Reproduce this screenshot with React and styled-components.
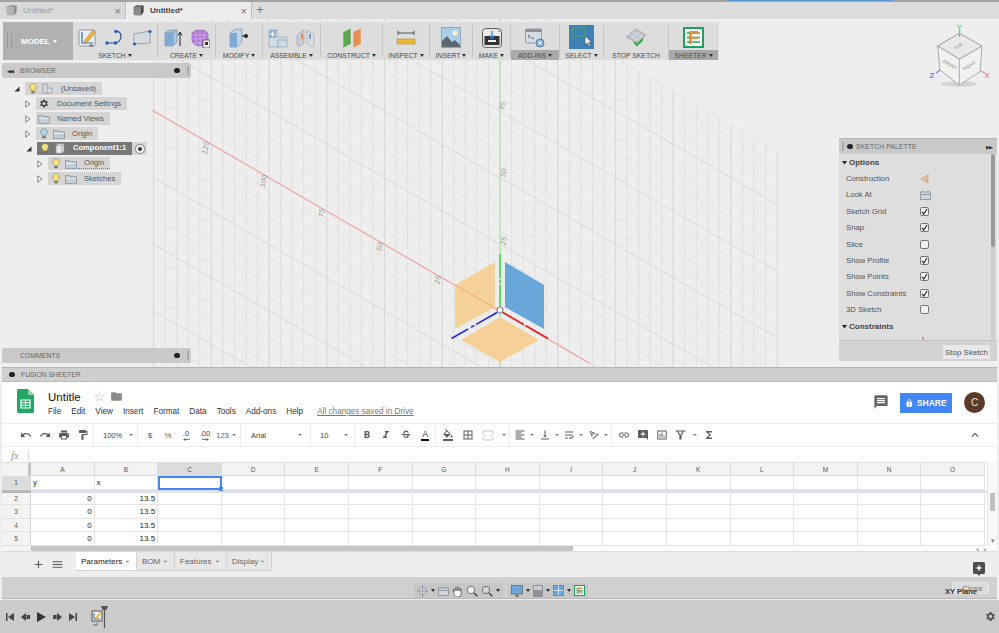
import styled, { createGlobalStyle } from "styled-components";
import {
  MdUndo,
  MdRedo,
  MdPrint,
  MdFormatPaint,
  MdFormatBold,
  MdFormatItalic,
  MdStrikethroughS,
  MdFormatColorFill,
  MdBorderAll,
  MdFormatAlignLeft,
  MdVerticalAlignBottom,
  MdWrapText,
  MdTextRotationAngleup,
  MdLink,
  MdAddComment,
  MdInsertChartOutlined,
  MdFunctions,
  MdKeyboardArrowUp,
  MdMessage,
  MdLock,
  MdStarBorder,
  MdFolder,
  MdAdd,
  MdMenu,
  MdArrowDropDown,
  MdSettings,
} from "react-icons/md";

const GlobalStyle = createGlobalStyle`
  html, body {
    margin: 0;
    padding: 0;
    background: #eeeeee;
    overflow: hidden;
  }
  * {
    box-sizing: border-box;
  }
`;

const Page = styled.div`
  width: 999px;
  height: 633px;
  display: flex;
  flex-direction: column;
  font-family: "Liberation Sans", Arial, sans-serif;
  background: #eeeeee;
  overflow: hidden;
  position: relative;
`;

/* ---------- document tabs ---------- */

const TabBar = styled.div`
  height: 19px;
  flex: none;
  display: flex;
  align-items: stretch;
  background: #dcdcdc;
  border-top: 2px solid #a3a3a3;
  position: relative;
`;

const LoadBar = styled.div`
  position: absolute;
  left: 727px;
  top: -2px;
  width: 166px;
  height: 1px;
  background: #5a9ad8;
`;

const DocTab = styled.div`
  width: 126px;
  display: flex;
  align-items: center;
  padding: 0 4px 0 6px;
  gap: 6px;
  font-size: 8px;
  background: ${(p) => (p.$active ? "#ececec" : "#d9d9d9")};
  color: ${(p) => (p.$active ? "#444" : "#999")};
  font-weight: ${(p) => (p.$active ? 700 : 400)};
  border-right: 1px solid #bdbdbd;
  border-left: ${(p) => (p.$active ? "1px solid #f5f5f5" : "none")};
`;

const TabClose = styled.span`
  margin-left: auto;
  font-size: 11px;
  font-weight: 400;
  color: #777;
`;

const TabPlus = styled.span`
  padding-left: 4px;
  font-size: 13px;
  line-height: 16px;
  color: #777;
`;

/* ---------- 3d viewport ---------- */

const Viewport = styled.div`
  height: 348px;
  flex: none;
  position: relative;
  background: #eeeeee;
  overflow: hidden;
`;

const CanvasSvg = styled.svg`
  position: absolute;
  inset: 0;
  width: 999px;
  height: 348px;
`;

const Toolbar = styled.div`
  position: absolute;
  left: 3px;
  top: 3px;
  width: 716px;
  height: 38px;
  display: flex;
  background: #dddddd;
`;

const ModelButton = styled.div`
  width: 70px;
  display: flex;
  align-items: center;
  justify-content: center;
  gap: 3px;
  padding-left: 2px;
  background: #b1b1b1;
  color: #fff;
  font-size: 8px;
  font-weight: 700;
  position: relative;
  &::before {
    content: "";
    position: absolute;
    left: 4px;
    top: 11px;
    width: 3px;
    height: 15px;
    border-left: 1px solid #989898;
    border-right: 1px solid #989898;
  }
`;

const ToolGroup = styled.div`
  width: ${(p) => p.$w}px;
  flex: none;
  display: flex;
  flex-direction: column;
`;

const ToolIcons = styled.div`
  flex: 1;
  display: flex;
  align-items: center;
  justify-content: center;
  gap: ${(p) => p.$gap || 7}px;
  padding-top: 3px;
`;

const ToolLabel = styled.div`
  height: 10px;
  display: flex;
  align-items: center;
  justify-content: center;
  gap: 2px;
  font-size: 6.8px;
  color: #4a4a4a;
  white-space: nowrap;
  background: ${(p) => (p.$on ? "#a9a9a9" : "transparent")};
`;

const Caret = styled.span`
  width: 0;
  height: 0;
  border-left: 2.5px solid transparent;
  border-right: 2.5px solid transparent;
  border-top: 3.5px solid ${(p) => p.$color || "#333"};
`;

const ToolSep = styled.div`
  width: 1px;
  height: 32px;
  flex: none;
  align-self: center;
  background: #c5c5c5;
`;

const SelectTile = styled.div`
  width: 25px;
  height: 24px;
  background: #3f81b6;
  margin-top: -1px;
`;

/* ---------- floating panels ---------- */

const PanelHead = styled.div`
  height: 15px;
  display: flex;
  align-items: center;
  padding: 0 2px 0 5px;
  gap: 4px;
  background: #c9c9c9;
  border-radius: 2px;
  font-size: 6.8px;
  color: #666;
  letter-spacing: 0.1px;
`;

const PaletteHead = styled(PanelHead)`
  padding-left: 3px;
  gap: 3px;
  border-radius: 0;
  flex: none;
`;

const DotButton = styled.span`
  width: 6px;
  height: 5px;
  border-radius: 3px;
  background: #222;
  margin-left: ${(p) => (p.$end ? "auto" : "0")};
  flex: none;
`;

const Grip = styled.span`
  width: 2px;
  height: 9px;
  margin-left: ${(p) => (p.$flush ? 0 : 3)}px;
  background: #aaa;
  flex: none;
`;

const DoubleArrow = styled.span`
  font-size: 5px;
  color: #333;
  letter-spacing: -1px;
  width: 9px;
  flex: none;
  margin-left: ${(p) => (p.$end ? "auto" : "0")};
`;

const BrowserPanel = styled.div`
  position: absolute;
  left: 2px;
  top: 44px;
  width: 189px;
`;

const CommentsPanel = styled.div`
  position: absolute;
  left: 2px;
  top: 329px;
  width: 189px;
`;

const Tree = styled.div`
  padding-top: 3px;
`;

const TreeRow = styled.div`
  height: 15px;
  display: flex;
  align-items: center;
  padding-left: ${(p) => p.$indent}px;
`;

const Expander = styled.span`
  width: 12px;
  flex: none;
  display: flex;
  justify-content: flex-start;
  padding-left: 1px;
`;

const TreeChip = styled.div`
  height: 13px;
  display: flex;
  align-items: center;
  background: ${(p) => (p.$active ? "#787878" : "#d5d5d5")};
  color: ${(p) => (p.$active ? "#fff" : "#555")};
  font-size: 7.6px;
  font-weight: ${(p) => (p.$active ? 700 : 400)};
`;

const TreeIcon = styled.span`
  width: 15px;
  flex: none;
  display: flex;
  justify-content: center;
`;

const TreeText = styled.span`
  padding: 0 6px 0 6px;
  white-space: nowrap;
  line-height: 10px;
  border-bottom: ${(p) => (p.$squiggle ? "1px dotted #5f86c4" : "none")};
`;

const TreeTail = styled.div`
  width: 15px;
  height: 13px;
  display: flex;
  align-items: center;
  justify-content: center;
  background: #d5d5d5;
`;

const RadioDot = styled.span`
  width: 8px;
  height: 8px;
  border-radius: 50%;
  border: 2px solid #f2f2f2;
  background: #333;
  box-shadow: 0 0 0 1px #8a8a8a;
`;

const Palette = styled.div`
  position: absolute;
  left: 839px;
  top: 119px;
  width: 158px;
  height: 223px;
  display: flex;
  flex-direction: column;
  background: #dedede;
  border-top: 1px solid #b5b5b5;
`;

const PaletteBody = styled.div`
  flex: 1;
  overflow: hidden;
  position: relative;
`;

const PaletteTrack = styled.div`
  position: absolute;
  right: 2px;
  top: 0;
  bottom: 0;
  width: 4px;
  background: #cfcfcf;
`;

const PaletteThumb = styled.div`
  height: 93px;
  background: #989898;
  border-radius: 2px;
`;

const PaletteHeading = styled.div`
  height: 16.4px;
  display: flex;
  align-items: center;
  gap: 2px;
  padding-left: 3px;
  font-size: 8px;
  font-weight: 700;
  color: #444;
`;

const PaletteRow = styled.div`
  height: 16.4px;
  display: flex;
  align-items: center;
  padding-left: 7px;
  font-size: 7.7px;
  color: #555;
`;

const PaletteLabel = styled.span`
  width: 74px;
  flex: none;
`;

const CheckBox = styled.span`
  width: 9px;
  height: 9px;
  display: flex;
  align-items: center;
  justify-content: center;
  border: 1px solid #777;
  border-radius: 2px;
  background: #f1f1f1;
`;

const PaletteFooter = styled.div`
  height: 21px;
  flex: none;
  display: flex;
  align-items: flex-end;
  justify-content: flex-end;
  padding: 0 7px 2px 0;
  background: #d3d3d3;
  border-top: 1px solid #c2c2c2;
`;

const StopButton = styled.div`
  width: 47px;
  height: 14px;
  display: flex;
  align-items: center;
  justify-content: center;
  background: #e8e8e8;
  font-size: 8px;
  color: #555;
  border-radius: 1px;
`;

const CubeSvg = styled.svg`
  position: absolute;
  left: 925px;
  top: 4px;
  width: 70px;
  height: 80px;
`;

/* ---------- embedded sheet ---------- */

const Sheeter = styled.div`
  height: 231px;
  flex: none;
  margin: 0 2px;
  display: flex;
  flex-direction: column;
  background: #fff;
  border-top: 1px solid #b5b5b5;
`;

const SheeterHead = styled.div`
  height: 14px;
  flex: none;
  display: flex;
  align-items: center;
  gap: 6px;
  padding-left: 7px;
  background: #cfcfcf;
  color: #666;
  font-size: 6.8px;
  border-bottom: 1px solid #bbb;
`;

const DocHeader = styled.div`
  height: 41px;
  flex: none;
  display: flex;
  padding: 7px 12px 0 15px;
`;

const TitleBlock = styled.div`
  margin-left: 14px;
  display: flex;
  flex-direction: column;
`;

const TitleRow = styled.div`
  height: 15px;
  display: flex;
  align-items: center;
  font-size: 11.5px;
  color: #111;
`;

const TitleIcon = styled.span`
  display: flex;
  margin-left: ${(p) => p.$ml}px;
  color: ${(p) => p.$color};
  font-size: ${(p) => p.$size}px;
`;

const MenuRow = styled.div`
  margin-top: 3px;
  display: flex;
  gap: 10px;
  font-size: 8.2px;
  color: #333;
`;

const SavedNote = styled.span`
  margin-left: 4px;
  color: #777;
  text-decoration: underline;
`;

const DocActions = styled.div`
  margin-left: auto;
  display: flex;
  align-items: flex-start;
`;

const CommentIcon = styled.span`
  display: flex;
  margin: 5px 11px 0 0;
  font-size: 16px;
  color: #666;
`;

const ShareButton = styled.div`
  width: 52px;
  height: 20px;
  margin-top: 4px;
  display: flex;
  align-items: center;
  justify-content: center;
  gap: 3px;
  background: #4285f4;
  border-radius: 1px;
  color: #fff;
  font-size: 8.5px;
  font-weight: 700;
`;

const Avatar = styled.div`
  width: 21px;
  height: 21px;
  margin: 3px 0 0 12px;
  display: flex;
  align-items: center;
  justify-content: center;
  border-radius: 50%;
  background: #5c3a2a;
  color: #f1e6e0;
  font-size: 10px;
`;

const SheetTools = styled.div`
  height: 24px;
  flex: none;
  display: flex;
  border-top: 1px solid #ececec;
  border-bottom: 1px solid #ececec;
`;

const ToolSet = styled.div`
  width: ${(p) => (p.$w ? `${p.$w}px` : "auto")};
  flex: ${(p) => (p.$w ? "none" : "1")};
  display: flex;
  align-items: center;
  padding-left: ${(p) => p.$pl || 0}px;
  border-right: ${(p) => (p.$w ? "1px solid #ececec" : "none")};
`;

const ToolCell = styled.span`
  width: ${(p) => p.$w}px;
  flex: none;
  display: flex;
  align-items: center;
  justify-content: center;
  font-size: ${(p) => p.$size || 12}px;
  color: ${(p) => p.$color || "#5c5c5c"};
`;

const ToolText = styled.span`
  flex: ${(p) => (p.$grow ? "1" : "none")};
  font-size: 7.5px;
  color: #444;
`;

const DownTick = styled.span`
  width: 0;
  height: 0;
  flex: none;
  margin: ${(p) => p.$m || "0 auto"};
  border-left: 2px solid transparent;
  border-right: 2px solid transparent;
  border-top: 2px solid #777;
`;

const ColorA = styled.span`
  display: flex;
  flex-direction: column;
  align-items: center;
  font-size: 9px;
  line-height: 9px;
  color: #444;
  border-bottom: 2px solid #111;
  padding: 0 1px;
`;

const Decimal = styled.span`
  display: flex;
  flex-direction: column;
  align-items: center;
  font-size: 7.5px;
  line-height: 8px;
  color: #444;
`;

const ChevronCell = styled.span`
  margin-left: auto;
  margin-right: 13px;
  width: 19px;
  display: flex;
  justify-content: center;
  font-size: 14px;
  color: #555;
`;

const FormulaBar = styled.div`
  height: 15px;
  flex: none;
  display: flex;
  align-items: center;
  padding-left: 9px;
  font-family: "Liberation Serif", serif;
  font-style: italic;
  font-size: 11px;
  color: #999;
`;

const FormulaDivider = styled.span`
  width: 1px;
  height: 10px;
  margin-left: 9px;
  background: #ddd;
`;

const SheetArea = styled.div`
  height: 84px;
  flex: none;
  display: flex;
`;

const SheetTable = styled.div`
  width: 985px;
  flex: none;
  display: flex;
  flex-direction: column;
`;

const GridRow = styled.div`
  height: ${(p) => p.$h}px;
  flex: none;
  display: grid;
  grid-template-columns: 29px repeat(15, 63.6px);
`;

const CornerCell = styled.div`
  background: #f3f3f3;
  border-right: 3px solid #c4c4c4;
  border-top: 1px solid #e0e0e0;
`;

const ColHead = styled.div`
  display: flex;
  align-items: center;
  justify-content: center;
  background: ${(p) => (p.$on ? "#dcdcdc" : "#f3f3f3")};
  border-right: 1px solid #dcdcdc;
  border-top: 1px solid #e0e0e0;
  border-bottom: 1px solid #dcdcdc;
  font-size: 6.5px;
  color: #555;
`;

const RowHead = styled.div`
  display: flex;
  align-items: center;
  justify-content: center;
  background: ${(p) => (p.$on ? "#dcdcdc" : "#f3f3f3")};
  border-right: 1px solid #d6d6d6;
  border-bottom: 1px solid #e2e2e2;
  font-size: 6.5px;
  color: #555;
`;

const Cell = styled.div`
  display: flex;
  align-items: center;
  justify-content: ${(p) => (p.$num ? "flex-end" : "flex-start")};
  padding: 0 2px;
  border-right: 1px solid #e4e4e4;
  border-bottom: 1px solid #e4e4e4;
  font-size: 8px;
  color: #222;
  position: relative;
  ${(p) =>
    p.$selected &&
    `
    outline: 2px solid #4285f4;
    outline-offset: -2px;
    &::after {
      content: "";
      position: absolute;
      right: -2px;
      bottom: -2px;
      width: 4px;
      height: 4px;
      background: #4285f4;
    }
  `}
`;

const FreezeBar = styled.div`
  height: 3px;
  flex: none;
  display: flex;
`;

const FreezeCorner = styled.div`
  width: 29px;
  background: #b9b9b9;
`;

const FreezeRest = styled.div`
  flex: 1;
  background: #dde1ec;
`;

const VScroll = styled.div`
  flex: 1;
  display: flex;
  flex-direction: column;
  background: #f8f8f8;
  border-left: 1px solid #e4e4e4;
  padding-top: 31px;
`;

const VThumb = styled.div`
  height: 18px;
  margin: 0 2px;
  background: #c0c0c0;
`;

const VArrow = styled.div`
  margin-top: auto;
  font-size: 7px;
  line-height: 10px;
  text-align: center;
  color: #888;
`;

const HScroll = styled.div`
  height: 6px;
  flex: none;
  display: flex;
  background: #fff;
  border-bottom: 1px solid #ddd;
`;

const HSpacer = styled.div`
  width: 29px;
  background: #f3f3f3;
`;

const HThumb = styled.div`
  width: 542px;
  background: #c6c6c6;
`;

const HArrows = styled.div`
  margin-left: auto;
  margin-right: 10px;
  display: flex;
  gap: 5px;
  font-size: 5px;
  line-height: 6px;
  color: #888;
`;

const SheetTabs = styled.div`
  height: 25px;
  flex: none;
  display: flex;
  align-items: flex-start;
  padding-left: 29px;
  background: #eeeeee;
`;

const TabTool = styled.span`
  width: ${(p) => p.$w}px;
  height: 19px;
  flex: none;
  display: flex;
  align-items: center;
  justify-content: center;
  font-size: 13px;
  color: #555;
  margin-top: 3px;
`;

const SheetTab = styled.div`
  width: ${(p) => p.$w}px;
  height: 19px;
  flex: none;
  display: flex;
  align-items: center;
  justify-content: space-between;
  padding: 0 4px 0 5px;
  font-size: 8px;
  color: ${(p) => (p.$active ? "#222" : "#666")};
  background: ${(p) => (p.$active ? "#fff" : "#e8e8e8")};
  border-right: 1px solid #d4d4d4;
  border-bottom: 1px solid #d4d4d4;
`;

const ExploreSlot = styled.span`
  margin-left: auto;
  margin-right: 12px;
  margin-top: 10px;
  display: flex;
`;

const NavStrip = styled.div`
  height: 22px;
  flex: none;
  display: flex;
  padding-left: 412px;
  background: #d0d0d0;
  border-bottom: 1px solid #b9b9b9;
  position: relative;
`;

const NavChip = styled.div`
  height: 15px;
  margin-top: 6px;
  margin-right: 5px;
  display: flex;
  align-items: center;
  gap: ${(p) => p.$gap || 3}px;
  padding: 0 3px;
  background: #c7c7c7;
`;

const CloseButton = styled.div`
  margin: 5px 8px 0 auto;
  width: 37px;
  height: 12px;
  display: flex;
  align-items: center;
  justify-content: center;
  padding-left: 4px;
  background: #dcdcdc;
  border: 1px solid #e4e4e4;
  font-size: 8px;
  color: #777;
`;

const PlaneName = styled.span`
  position: absolute;
  left: 943px;
  top: 10px;
  font-size: 7.5px;
  font-weight: 700;
  color: #333;
  white-space: nowrap;
`;

const Timeline = styled.div`
  height: 33px;
  margin-top: 2px;
  flex: none;
  display: flex;
  align-items: center;
  padding: 0 3px 0 2px;
  background: #cbcbcb;
`;

const PlayButton = styled.span`
  width: 15.7px;
  flex: none;
  display: flex;
  justify-content: center;
`;

const TimelineItem = styled.span`
  display: flex;
  margin-left: 11px;
`;

const GearSlot = styled.span`
  margin-left: auto;
  display: flex;
  font-size: 11px;
  color: #555;
`;

/* ---------- drawings ---------- */

const Bulb = ({ color = "#f6e27a" }) => (
  <svg width="8" height="11" viewBox="0 0 8 11">
    <path d="M4 .5a3.4 3.4 0 0 1 2 6.2V8H2V6.7A3.4 3.4 0 0 1 4 .5z" fill={color} stroke="#8a8a6a" strokeWidth=".6" />
    <rect x="2.4" y="8.4" width="3.2" height="1.8" fill="#666" />
  </svg>
);

const Folder = () => (
  <svg width="12" height="10" viewBox="0 0 12 10">
    <path d="M.5 1.5h4l1 1.2h6v7H.5z" fill="#c3cdd8" stroke="#7d8895" strokeWidth=".7" />
    <rect x="1" y="4" width="10" height="1" fill="#e9edf1" />
  </svg>
);

const Gear = () => (
  <svg width="11" height="11" viewBox="0 0 24 24" fill="#444">
    <path d="M19.4 13a7.5 7.5 0 0 0 0-2l2.1-1.6-2-3.4-2.5 1a7.5 7.5 0 0 0-1.7-1L15 3.4h-4l-.4 2.6a7.5 7.5 0 0 0-1.7 1l-2.5-1-2 3.4L6.5 11a7.5 7.5 0 0 0 0 2l-2.1 1.6 2 3.4 2.5-1a7.5 7.5 0 0 0 1.7 1l.4 2.6h4l.4-2.6a7.5 7.5 0 0 0 1.7-1l2.5 1 2-3.4zM13 15.5a3.5 3.5 0 1 1 0-7 3.5 3.5 0 0 1 0 7z" />
  </svg>
);

const BoxSmall = () => (
  <svg width="10" height="11" viewBox="0 0 10 11">
    <path d="M1 2.5 3 .8h6v7.7L7 10.2H1z" fill="#e6e6e6" stroke="#8a8f96" strokeWidth=".6" />
    <path d="M7 2.5v7.7M1 2.5h6L9 .8" fill="none" stroke="#8a8f96" strokeWidth=".6" />
  </svg>
);

const TabCube = ({ dark }) => (
  <svg width="11" height="11" viewBox="0 0 11 11">
    <path d="M.5 2 3.5.5h7V7L8 10.5H2L.5 9z" fill={dark ? "#8a8a8a" : "#b4b4b4"} />
    <path d="M.5 2H8L10.5.5h-7z" fill={dark ? "#5f5f5f" : "#9a9a9a"} />
    <path d="M8 2v8.5L10.5 7V.5z" fill={dark ? "#4a4a4a" : "#8c8c8c"} />
  </svg>
);

const CompIcon = () => (
  <svg width="11" height="11" viewBox="0 0 11 11">
    <path d="M1 1h4v4h5v5H1z" fill="#d6dde6" stroke="#8a8f96" strokeWidth=".7" />
    <path d="M5 5v5" stroke="#8a8f96" strokeWidth=".6" />
  </svg>
);

const TriOpen = () => (
  <svg width="6" height="8" viewBox="0 0 6 8">
    <path d="M.8.8 5 4 .8 7.2z" fill="#fafafa" stroke="#666" strokeWidth=".8" />
  </svg>
);

const TriDown = () => (
  <svg width="6" height="6" viewBox="0 0 6 6">
    <path d="M5.5.5v5H.5z" fill="#333" />
  </svg>
);

const Check = () => (
  <svg width="7" height="7" viewBox="0 0 7 7">
    <path d="M1 3.8 2.8 6 6 1" fill="none" stroke="#222" strokeWidth="1.1" />
  </svg>
);

const HeadDown = () => (
  <svg width="5" height="5" viewBox="0 0 5 5">
    <path d="M0 1h5L2.5 4.5z" fill="#222" />
  </svg>
);

const SketchCreate = () => (
  <svg width="20" height="20" viewBox="0 0 20 20">
    <rect x="1" y="2" width="16" height="16" rx="1.5" fill="#e8eef4" stroke="#8d97a3" />
    <path d="M4 4v11h11" fill="none" stroke="#3a6cae" strokeWidth="1.2" />
    <path d="M7 12 15 2l2.5 2-8 10-3 1z" fill="#f2b632" stroke="#a3731d" strokeWidth=".5" />
    <path d="M13 16v3M11.5 17.5h4" stroke="#666" strokeWidth="1" />
  </svg>
);

const ArcIcon = () => (
  <svg width="20" height="20" viewBox="0 0 20 20">
    <path d="M2 15h7M11 3c7 0 7 12-2 12" fill="none" stroke="#2c4f7c" strokeWidth="1.2" />
    <circle cx="2" cy="15" r="1.7" fill="#1f5fc4" />
    <circle cx="10.5" cy="15" r="1.7" fill="#1f5fc4" />
    <circle cx="11" cy="3.5" r="1.7" fill="#1f5fc4" />
  </svg>
);

const RectIcon = () => (
  <svg width="20" height="20" viewBox="0 0 20 20">
    <path d="M2 6 18 3v12L2 16z" fill="#d7dce1" stroke="#7e8894" strokeWidth=".7" />
    <circle cx="2.5" cy="16" r="1.6" fill="#1f5fc4" />
    <circle cx="18" cy="3.5" r="1.6" fill="#1f5fc4" />
  </svg>
);

const ExtrudeIcon = () => (
  <svg width="19" height="20" viewBox="0 0 19 20">
    <path d="M1 5 5 2h8v12l-4 4H1z" fill="#a7c7e6" stroke="#6d8196" strokeWidth=".6" />
    <path d="M1 5h8v13M9 5l4-3" fill="none" stroke="#6d8196" strokeWidth=".6" />
    <path d="M1 5h8v13H1z" fill="#7fa9d2" />
    <path d="M16 18V5M14 7.5 16 4l2 3.5" fill="none" stroke="#222" strokeWidth="1" />
  </svg>
);

const MeshIcon = () => (
  <svg width="19" height="20" viewBox="0 0 19 20">
    <path d="M1 6c1-3 4-4 8-4s7 1 8 4v7c0 3-4 5-8 5s-7-2-8-5z" fill="#b27ad6" stroke="#7a4aa3" strokeWidth=".5" />
    <path d="M5 3v14M9 2v16M13 3v14M1 7h16M1 11h16M2 15h15" stroke="#dcc1ee" strokeWidth=".6" />
    <rect x="12" y="12" width="7" height="8" fill="#eee" stroke="#333" strokeWidth=".7" />
    <rect x="14" y="14" width="3" height="3" fill="#333" />
  </svg>
);

const PressIcon = () => (
  <svg width="20" height="20" viewBox="0 0 20 20">
    <path d="M1 5 6 1h7v13l-5 5H1z" fill="#bcd3ea" stroke="#6d8196" strokeWidth=".6" />
    <path d="M1 5h7v14H1z" fill="#7fa9d2" />
    <path d="M13 8h4" stroke="#222" strokeWidth="1.2" />
    <circle cx="17" cy="8" r="2" fill="#222" />
  </svg>
);

const JoinIcon = () => (
  <svg width="20" height="20" viewBox="0 0 20 20">
    <path d="M1 2h8v7h10v10H1z" fill="#cfdce9" stroke="#8a98a6" strokeWidth=".6" />
    <path d="M1 2h7v8H1z" fill="#8fb4da" />
    <path d="M4.5 3.5v5M2 6h5" stroke="#fff" strokeWidth="1" />
    <path d="M10 12h9M10 12v7" stroke="#8a98a6" strokeWidth=".7" />
  </svg>
);

const JointIcon = () => (
  <svg width="19" height="20" viewBox="0 0 19 20">
    <path d="M1 7 8 2v13l-5 4-2-2z" fill="#c7cdd4" stroke="#8a8f96" strokeWidth=".5" />
    <path d="M11 2l7 5v10l-2 2-5-4z" fill="#d9dee3" stroke="#8a8f96" strokeWidth=".5" />
    <rect x="5" y="6" width="2" height="5" fill="#e98a4a" />
    <rect x="13" y="6" width="2" height="5" fill="#6ea0d6" />
  </svg>
);

const ConstructIcon = () => (
  <svg width="20" height="22" viewBox="0 0 20 22">
    <path d="M1 5 9 1v16l-8 4z" fill="#5fa653" stroke="#e6efe2" strokeWidth=".5" />
    <path d="M11 5l8-4v16l-8 4z" fill="#e98f4f" stroke="#f6e4d6" strokeWidth=".5" />
  </svg>
);

const MeasureIcon = () => (
  <svg width="20" height="16" viewBox="0 0 20 16">
    <path d="M2 3h16M2 1v4M18 1v4" stroke="#555" strokeWidth="1" fill="none" />
    <rect x="1" y="9" width="18" height="5" fill="#efb632" stroke="#a87f1f" strokeWidth=".5" />
  </svg>
);

const PictureIcon = () => (
  <svg width="20" height="21" viewBox="0 0 20 21">
    <rect x=".5" y=".5" width="19" height="20" fill="#a9d0ea" stroke="#9aa3ac" />
    <circle cx="14" cy="6" r="2.6" fill="#f6efc8" />
    <path d="M1 20V14l5-5 5 6 3-2 5 5v2z" fill="#5f6770" />
  </svg>
);

const PrinterIcon = () => (
  <svg width="20" height="20" viewBox="0 0 20 20">
    <rect x=".6" y=".6" width="18.8" height="18.8" rx="3" fill="#ececec" stroke="#555" />
    <rect x="2.5" y="8" width="15" height="9" fill="#333" />
    <path d="M10 3v7M7.5 7.5 10 10.5l2.500-3" fill="none" stroke="#2a79c4" strokeWidth="1.2" />
    <rect x="6" y="12" width="8" height="2" fill="#eee" />
    <rect x="16" y="2.5" width="2" height="1.5" fill="#5fc24f" />
  </svg>
);

const ScriptIcon = () => (
  <svg width="20" height="20" viewBox="0 0 20 20">
    <rect x=".5" y="1" width="16" height="14" rx="1" fill="#d5dbe2" stroke="#7d8590" strokeWidth=".7" />
    <rect x=".5" y="1" width="16" height="3" fill="#8a929c" />
    <path d="M3 7l2 1.5L3 10M6 10h3" fill="none" stroke="#333" strokeWidth=".7" />
    <circle cx="15" cy="15" r="4" fill="#8fb9e0" stroke="#4e7ba8" />
    <circle cx="15" cy="15" r="1.4" fill="#eef4fa" />
  </svg>
);

const SelectIcon = () => (
  <svg width="25" height="24" viewBox="0 0 25 24">
    <rect x="3" y="3" width="13" height="8" fill="none" stroke="#4ea85a" strokeWidth="1" />
    <path d="M16 11v9l2.2-2 1.6 3.6 1.6-.7-1.6-3.5H23z" fill="#f0f0f0" stroke="#333" strokeWidth=".5" />
  </svg>
);

const StopIcon = () => (
  <svg width="22" height="20" viewBox="0 0 22 20">
    <path d="M1 9 11 1l10 6-8 8z" fill="#bcc2c9" stroke="#888" strokeWidth=".5" />
    <path d="M4 6.5l10 6M7.5 4l10 6M6 11l8-7M9.5 13.5l8-7" stroke="#eee" strokeWidth=".7" />
    <path d="M9 14l3 3 6-6" fill="none" stroke="#3aa34a" strokeWidth="2" />
  </svg>
);

const SheeterIcon = ({ size = 21 }) => (
  <svg width={size} height={size} viewBox="0 0 21 21">
    <rect x="1" y="1" width="19" height="19" fill="#fff" stroke="#1aa35a" strokeWidth="2" />
    <path d="M4 6h13M4 10.5h13M4 15h13" stroke="#1aa35a" strokeWidth="1.5" />
    <text x="10.5" y="17" fontFamily="Liberation Sans" fontWeight="700" fontSize="18" fill="#e98a3a" textAnchor="middle">
      F
    </text>
  </svg>
);

const SheetsLogo = () => (
  <svg width="17" height="24" viewBox="0 0 17 24">
    <path d="M1.5 0H11l6 6v16.5a1.5 1.5 0 0 1-1.5 1.5h-14A1.5 1.5 0 0 1 0 22.5v-21A1.5 1.5 0 0 1 1.5 0z" fill="#23a566" />
    <path d="M11 0l6 6h-6z" fill="#8ed1b1" />
    <path d="M4 11h9v8H4z" fill="none" stroke="#fff" strokeWidth="1.2" />
    <path d="M8.5 11v8M4 13.7h9M4 16.3h9" stroke="#fff" strokeWidth=".9" />
  </svg>
);

const FilterIcon = () => (
  <svg width="11" height="10" viewBox="0 0 11 10">
    <path d="M.5 1h10M2.5 1 5 5.5V9h1V5.5L8.5 1" fill="none" stroke="#5c5c5c" strokeWidth="1.2" />
  </svg>
);

const MergeIcon = () => (
  <svg width="12" height="11" viewBox="0 0 12 11">
    <path d="M1 4V1h10v3M1 7v3h10V7M1 5.5h3M8 5.5h3" fill="none" stroke="#c9c9c9" strokeWidth="1" />
  </svg>
);

const DecimalArrow = ({ dir }) => (
  <svg width="7" height="3" viewBox="0 0 7 3">
    <path d={dir === "left" ? "M7 1.5H1M2.5 0 1 1.5 2.5 3" : "M0 1.5h6M4.5 0 6 1.5 4.5 3"} fill="none" stroke="#444" strokeWidth=".7" />
  </svg>
);

const ExploreIcon = () => (
  <svg width="12" height="14" viewBox="0 0 12 14">
    <path d="M1.5 0h9A1.5 1.5 0 0 1 12 1.5v9a1.5 1.5 0 0 1-1.5 1.5h-3L6 14l-1.5-2h-3A1.5 1.5 0 0 1 0 10.5v-9A1.5 1.5 0 0 1 1.5 0z" fill="#4d4d4d" />
    <path d="M6 2.500 7 5l2.500 1L7 7 6 9.500 5 7 2.500 6 5 5z" fill="#fff" />
  </svg>
);

const OrbitIcon = () => (
  <svg width="11" height="12" viewBox="0 0 11 12">
    <circle cx="5.5" cy="6" r="3.5" fill="#dfe3e7" stroke="#7d8590" strokeWidth=".7" />
    <path d="M5.5 0v12M0 6h11" stroke="#7d8590" strokeWidth=".7" />
  </svg>
);

const LookIcon = () => (
  <svg width="11" height="10" viewBox="0 0 11 10">
    <rect x=".5" y="2" width="10" height="7.5" fill="#cfd5db" stroke="#7d8590" strokeWidth=".7" />
    <path d="M3 2V.5M8 2V.5M.5 4.5h10" stroke="#7d8590" strokeWidth=".7" />
  </svg>
);

const HandIcon = () => (
  <svg width="11" height="12" viewBox="0 0 11 12">
    <path d="M2 7V3.5M4 6V2M6 6V1.5M8 6.5V3M2 7 1 5.5M2 6l.5 4 2 1.500h3L9 9.500V4.500" fill="#fff" stroke="#555" strokeWidth="1.1" />
    <path d="M2.5 6h6v4L7 11.500H4L2.500 10z" fill="#fff" />
  </svg>
);

const ZoomIcon = ({ fill = "#f2f2f2" }) => (
  <svg width="12" height="12" viewBox="0 0 12 12">
    <circle cx="5" cy="5" r="3.7" fill={fill} stroke="#666" strokeWidth=".9" />
    <path d="M8 8l3.3 3.3" stroke="#444" strokeWidth="1.5" />
  </svg>
);

const MonitorIcon = () => (
  <svg width="12" height="12" viewBox="0 0 12 12">
    <rect x=".5" y=".5" width="11" height="8.5" fill="#6ea6db" stroke="#5a6570" strokeWidth=".7" />
    <path d="M4 11h4M6 9v2" stroke="#555" strokeWidth="1" />
  </svg>
);

const VisualIcon = () => (
  <svg width="10" height="12" viewBox="0 0 10 12">
    <rect x=".3" y=".3" width="9.4" height="11.4" rx="1" fill="#8f949a" stroke="#777" strokeWidth=".5" />
    <rect x="1" y="1" width="8" height="4" fill="#c9ccd0" />
  </svg>
);

const PanesIcon = () => (
  <svg width="11" height="11" viewBox="0 0 11 11">
    <rect x=".5" y=".5" width="10" height="10" fill="#6ea6db" stroke="#5a7a99" strokeWidth=".7" />
    <path d="M5.5.5v10M.5 5.5h10" stroke="#e6eef6" strokeWidth=".8" />
  </svg>
);

const SkipIcon = ({ dir }) => (
  <svg width="10" height="10" viewBox="0 0 10 10">
    {dir === "first" && <path d="M1 1h1.500v8H1zM9 1v8L3 5z" fill="#444" />}
    {dir === "prev" && <path d="M5 1v8L0 5zM5.500 3H9v4H5.500z" fill="#444" />}
    {dir === "play" && <path d="M1 0l9 5-9 5z" fill="#333" />}
    {dir === "next" && <path d="M5 1v8l5-4zM1 3h3.500v4H1z" fill="#444" />}
    {dir === "last" && <path d="M9 1H7.500v8H9zM1 1v8l6-4z" fill="#444" />}
  </svg>
);

const TimelineMark = () => (
  <svg width="18" height="22" viewBox="0 0 18 22">
    <rect x="1" y="5" width="10" height="10" fill="#e8eef4" stroke="#555" strokeWidth="1" />
    <path d="M3 7v6h6" fill="none" stroke="#3a6cae" />
    <path d="M4 12l5-6 1.500 1-5 6z" fill="#f2b632" />
    <path d="M2 19h4v-2" fill="none" stroke="#666" />
    <path d="M10 0h7l-1.500 4h-4z" fill="#555" />
    <path d="M13.500 3v19" stroke="#555" strokeWidth="1.2" />
  </svg>
);

/* ---------- viewport drawing ---------- */

const ORIGIN_X = 500;
const ORIGIN_Y = 311;
const SLOPE = 0.57735;
const X_STEP = 11.547;
const Y_STEP = 13.333;
const LEFT = 152;
const RIGHT = 778;

const diagY = (m, x) => ORIGIN_Y + m * Y_STEP + (x - ORIGIN_X) * SLOPE;

function Grid() {
  const verticals = [];
  for (let k = -30; k <= 24; k++) {
    const x = ORIGIN_X + k * X_STEP;
    verticals.push(
      <line
        key={`v${k}`}
        x1={x}
        x2={x}
        y1={diagY(-24, x)}
        y2={370}
        stroke={k % 5 === 0 ? "#d8d8d8" : "#e1e1e1"}
        strokeWidth={k % 5 === 0 ? 1.2 : 1}
      />
    );
  }
  const diagonals = [];
  for (let m = -24; m <= 40; m++) {
    diagonals.push(
      <line
        key={`d${m}`}
        x1={LEFT}
        x2={RIGHT}
        y1={diagY(m, LEFT)}
        y2={diagY(m, RIGHT)}
        stroke={m % 5 === 0 ? "#d9d9d9" : "#e2e2e2"}
        strokeWidth={m % 5 === 0 ? 1 : 0.9}
      />
    );
  }
  return (
    <>
      {verticals}
      {diagonals}
    </>
  );
}

const axisLabels = [
  { t: "125", x: 206, y: 148 },
  { t: "100", x: 264, y: 181 },
  { t: "75", x: 322, y: 213 },
  { t: "50", x: 380, y: 247 },
  { t: "25", x: 438, y: 280 },
  { t: "75", x: 503, y: 106 },
  { t: "50", x: 504, y: 173 },
  { t: "25", x: 504, y: 241 },
];

function Canvas() {
  return (
    <CanvasSvg viewBox="0 19 999 348">
      <Grid />
      <line x1="500" y1="19" x2="500" y2="367" stroke="#aeeaa4" strokeWidth="1.2" />
      <line x1={LEFT} y1="110" x2="590" y2="363.5" stroke="#f5a0a0" strokeWidth="1.1" />
      {axisLabels.map((l) => (
        <text
          key={`${l.t}-${l.x}`}
          x={l.x}
          y={l.y}
          transform={`rotate(-80 ${l.x} ${l.y})`}
          fontFamily="Liberation Sans"
          fontStyle="italic"
          fontSize="7.5"
          fill="#999"
          textAnchor="middle"
          dominantBaseline="middle"
        >
          {l.t}
        </text>
      ))}
      <polygon points="455,285 495,262 495,307 455,329" fill="#f6d096" fillOpacity=".95" />
      <polygon points="500,317 539,340 500,362 461,340" fill="#f6d096" />
      <polygon points="505,262 544,285 544,329 505,307" fill="#69a6d9" />
      <line x1="455" y1="285" x2="497" y2="309" stroke="#f2a77a" strokeWidth="1" />
      <line x1="500" y1="254" x2="500" y2="306" stroke="#3fdc4c" strokeWidth="1.6" strokeDasharray="24 2 3 2 30" />
      <line x1="497" y1="312.5" x2="451.5" y2="338.5" stroke="#2020e0" strokeWidth="1.6" strokeDasharray="24 2 4 3 30" />
      <line x1="503" y1="312.5" x2="548" y2="338.5" stroke="#f01c24" strokeWidth="1.6" strokeDasharray="24 2 30" />
      <circle cx="500" cy="310" r="3" fill="#f2f2f2" stroke="#888" strokeWidth="1.2" />
    </CanvasSvg>
  );
}

function ViewCube() {
  const faceText = {
    fontFamily: "Liberation Sans",
    fontSize: 4.5,
    fill: "#8a8a8a",
    textAnchor: "middle",
  };
  return (
    <CubeSvg viewBox="925 23 70 80">
      <ellipse cx="959" cy="84" rx="18" ry="3" fill="#d4d4d4" />
      <path d="M937.7 46 959.3 33.3 982 46 980 71.7 959.3 85 940 70z" fill="#f1f1f1" stroke="#999" strokeWidth=".8" />
      <path d="M937.7 46 959.3 59 982 46M959.3 59v26" fill="none" stroke="#999" strokeWidth=".8" />
      <path d="M937.7 46 959.3 33.3 982 46 959.3 59z" fill="#e9e9e9" stroke="#999" strokeWidth=".8" />
      <text {...faceText} transform="translate(960 47) rotate(-30) skewX(25)">TOP</text>
      <text {...faceText} transform="translate(949 66) rotate(30)">FRONT</text>
      <text {...faceText} transform="translate(970 67) rotate(-30)">RIGHT</text>
      <path d="M959.5 37V30" stroke="#55d868" strokeWidth="1.3" />
      <path d="M940 70l-4 3" stroke="#7d7df0" strokeWidth="1.2" />
      <path d="M980 71l5 2" stroke="#f59090" strokeWidth="1.2" />
      <text x="959.5" y="30" fontFamily="Liberation Sans" fontWeight="700" fontSize="8" fill="#5fe070" textAnchor="middle">Y</text>
      <text x="932" y="78" fontFamily="Liberation Sans" fontWeight="700" fontSize="8" fill="#7d7df0" textAnchor="middle">Z</text>
      <text x="987" y="78" fontFamily="Liberation Sans" fontWeight="700" fontSize="8" fill="#f28a8a" textAnchor="middle">X</text>
    </CubeSvg>
  );
}

/* ---------- data ---------- */

const columns = ["A", "B", "C", "D", "E", "F", "G", "H", "I", "J", "K", "L", "M", "N", "O"];
const blanks = columns.slice(3);
const dataRows = [
  { n: 2, h: 12 },
  { n: 3, h: 14 },
  { n: 4, h: 13 },
  { n: 5, h: 14 },
];
const paletteOptions = [
  { name: "Sketch Grid", on: true },
  { name: "Snap", on: true },
  { name: "Slice", on: false },
  { name: "Show Profile", on: true },
  { name: "Show Points", on: true },
  { name: "Show Constraints", on: true },
  { name: "3D Sketch", on: false },
];
const menus = ["File", "Edit", "View", "Insert", "Format", "Data", "Tools", "Add-ons", "Help"];

function Browser() {
  return (
    <BrowserPanel>
      <PanelHead>
        <DoubleArrow>◀◀</DoubleArrow>
        BROWSER
        <DotButton $end />
        <Grip />
      </PanelHead>
      <Tree>
        <TreeRow $indent={11}>
          <Expander><TriDown /></Expander>
          <TreeChip>
            <TreeIcon><Bulb /></TreeIcon>
            <TreeIcon><CompIcon /></TreeIcon>
            <TreeText>(Unsaved)</TreeText>
          </TreeChip>
        </TreeRow>
        <TreeRow $indent={22}>
          <Expander><TriOpen /></Expander>
          <TreeChip>
            <TreeIcon><Gear /></TreeIcon>
            <TreeText>Document Settings</TreeText>
          </TreeChip>
        </TreeRow>
        <TreeRow $indent={22}>
          <Expander><TriOpen /></Expander>
          <TreeChip>
            <TreeIcon><Folder /></TreeIcon>
            <TreeText>Named Views</TreeText>
          </TreeChip>
        </TreeRow>
        <TreeRow $indent={22}>
          <Expander><TriOpen /></Expander>
          <TreeChip>
            <TreeIcon><Bulb color="#a8d0f0" /></TreeIcon>
            <TreeIcon><Folder /></TreeIcon>
            <TreeText>Origin</TreeText>
          </TreeChip>
        </TreeRow>
        <TreeRow $indent={23}>
          <Expander><TriDown /></Expander>
          <TreeChip $active>
            <TreeIcon><Bulb /></TreeIcon>
            <TreeIcon><BoxSmall /></TreeIcon>
            <TreeText $squiggle>Component1:1</TreeText>
          </TreeChip>
          <TreeTail><RadioDot /></TreeTail>
        </TreeRow>
        <TreeRow $indent={34}>
          <Expander><TriOpen /></Expander>
          <TreeChip>
            <TreeIcon><Bulb /></TreeIcon>
            <TreeIcon><Folder /></TreeIcon>
            <TreeText $squiggle>Origin</TreeText>
          </TreeChip>
        </TreeRow>
        <TreeRow $indent={34}>
          <Expander><TriOpen /></Expander>
          <TreeChip>
            <TreeIcon><Bulb /></TreeIcon>
            <TreeIcon><Folder /></TreeIcon>
            <TreeText>Sketches</TreeText>
          </TreeChip>
        </TreeRow>
      </Tree>
    </BrowserPanel>
  );
}

function SketchPalette() {
  return (
    <Palette>
      <PaletteHead>
        <Grip $flush />
        <DotButton />
        SKETCH PALETTE
        <DoubleArrow $end>▶▶</DoubleArrow>
      </PaletteHead>
      <PaletteBody>
        <PaletteHeading><HeadDown />Options</PaletteHeading>
        <PaletteRow>
          <PaletteLabel>Construction</PaletteLabel>
          <svg width="10" height="10" viewBox="0 0 10 10">
            <path d="M9 1 1 5l8 4M4 5h5M7 1v8" fill="none" stroke="#d99a5a" strokeWidth=".9" />
          </svg>
        </PaletteRow>
        <PaletteRow>
          <PaletteLabel>Look At</PaletteLabel>
          <LookIcon />
        </PaletteRow>
        {paletteOptions.map((o) => (
          <PaletteRow key={o.name}>
            <PaletteLabel>{o.name}</PaletteLabel>
            <CheckBox>{o.on && <Check />}</CheckBox>
          </PaletteRow>
        ))}
        <PaletteHeading><HeadDown />Constraints</PaletteHeading>
        <PaletteRow>
          <PaletteLabel>Coincident</PaletteLabel>
          <svg width="10" height="10" viewBox="0 0 10 10">
            <path d="M3 0v10" stroke="#e0404a" strokeWidth="1" />
          </svg>
        </PaletteRow>
        <PaletteTrack>
          <PaletteThumb />
        </PaletteTrack>
      </PaletteBody>
      <PaletteFooter>
        <StopButton>Stop Sketch</StopButton>
      </PaletteFooter>
    </Palette>
  );
}

function FusionToolbar() {
  return (
    <Toolbar>
      <ModelButton>
        MODEL <Caret $color="#fff" />
      </ModelButton>
      <ToolGroup $w={84}>
        <ToolIcons>
          <SketchCreate />
          <ArcIcon />
          <RectIcon />
        </ToolIcons>
        <ToolLabel>SKETCH <Caret /></ToolLabel>
      </ToolGroup>
      <ToolSep />
      <ToolGroup $w={57}>
        <ToolIcons $gap={8}>
          <ExtrudeIcon />
          <MeshIcon />
        </ToolIcons>
        <ToolLabel>CREATE <Caret /></ToolLabel>
      </ToolGroup>
      <ToolSep />
      <ToolGroup $w={46}>
        <ToolIcons>
          <PressIcon />
        </ToolIcons>
        <ToolLabel>MODIFY <Caret /></ToolLabel>
      </ToolGroup>
      <ToolSep />
      <ToolGroup $w={57}>
        <ToolIcons $gap={8}>
          <JoinIcon />
          <JointIcon />
        </ToolIcons>
        <ToolLabel>ASSEMBLE <Caret /></ToolLabel>
      </ToolGroup>
      <ToolSep />
      <ToolGroup $w={61}>
        <ToolIcons>
          <ConstructIcon />
        </ToolIcons>
        <ToolLabel>CONSTRUCT <Caret /></ToolLabel>
      </ToolGroup>
      <ToolSep />
      <ToolGroup $w={46}>
        <ToolIcons>
          <MeasureIcon />
        </ToolIcons>
        <ToolLabel>INSPECT <Caret /></ToolLabel>
      </ToolGroup>
      <ToolSep />
      <ToolGroup $w={42}>
        <ToolIcons>
          <PictureIcon />
        </ToolIcons>
        <ToolLabel>INSERT <Caret /></ToolLabel>
      </ToolGroup>
      <ToolSep />
      <ToolGroup $w={37}>
        <ToolIcons>
          <PrinterIcon />
        </ToolIcons>
        <ToolLabel>MAKE <Caret /></ToolLabel>
      </ToolGroup>
      <ToolSep />
      <ToolGroup $w={48}>
        <ToolIcons>
          <ScriptIcon />
        </ToolIcons>
        <ToolLabel $on>ADD-INS <Caret /></ToolLabel>
      </ToolGroup>
      <ToolSep />
      <ToolGroup $w={43}>
        <ToolIcons>
          <SelectTile>
            <SelectIcon />
          </SelectTile>
        </ToolIcons>
        <ToolLabel>SELECT <Caret /></ToolLabel>
      </ToolGroup>
      <ToolSep />
      <ToolGroup $w={64}>
        <ToolIcons>
          <StopIcon />
        </ToolIcons>
        <ToolLabel>STOP SKETCH</ToolLabel>
      </ToolGroup>
      <ToolSep />
      <ToolGroup $w={49}>
        <ToolIcons>
          <SheeterIcon />
        </ToolIcons>
        <ToolLabel $on>SHEETER <Caret /></ToolLabel>
      </ToolGroup>
    </Toolbar>
  );
}

function SpreadsheetTools() {
  return (
    <SheetTools>
      <ToolSet $w={92} $pl={14}>
        <ToolCell $w={19}><MdUndo /></ToolCell>
        <ToolCell $w={19}><MdRedo /></ToolCell>
        <ToolCell $w={19}><MdPrint /></ToolCell>
        <ToolCell $w={19}><MdFormatPaint /></ToolCell>
      </ToolSet>
      <ToolSet $w={44} $pl={9}>
        <ToolText>100%</ToolText>
        <DownTick $m="0 0 0 7px" />
      </ToolSet>
      <ToolSet $w={103} $pl={3}>
        <ToolCell $w={18} $size={8}>$</ToolCell>
        <ToolCell $w={18} $size={8}>%</ToolCell>
        <ToolCell $w={18}>
          <Decimal>.0<DecimalArrow dir="left" /></Decimal>
        </ToolCell>
        <ToolCell $w={20}>
          <Decimal>.00<DecimalArrow dir="right" /></Decimal>
        </ToolCell>
        <ToolCell $w={15} $size={7.5}>123</ToolCell>
        <DownTick $m="0 0 0 2px" />
      </ToolSet>
      <ToolSet $w={70} $pl={10}>
        <ToolText $grow>Arial</ToolText>
        <DownTick $m="0 8px 0 0" />
      </ToolSet>
      <ToolSet $w={44} $pl={9}>
        <ToolText $grow>10</ToolText>
        <DownTick $m="0 6px 0 0" />
      </ToolSet>
      <ToolSet $w={81} $pl={2}>
        <ToolCell $w={19.5}><MdFormatBold /></ToolCell>
        <ToolCell $w={19.5}><MdFormatItalic /></ToolCell>
        <ToolCell $w={19.5}><MdStrikethroughS /></ToolCell>
        <ToolCell $w={19.5}><ColorA>A</ColorA></ToolCell>
      </ToolSet>
      <ToolSet $w={74} $pl={2}>
        <ToolCell $w={20}><MdFormatColorFill /></ToolCell>
        <ToolCell $w={20}><MdBorderAll /></ToolCell>
        <ToolCell $w={20}><MergeIcon /></ToolCell>
        <DownTick />
      </ToolSet>
      <ToolSet $w={102} $pl={3}>
        <ToolCell $w={14}><MdFormatAlignLeft /></ToolCell>
        <ToolCell $w={10.6}><DownTick /></ToolCell>
        <ToolCell $w={14}><MdVerticalAlignBottom /></ToolCell>
        <ToolCell $w={10.6}><DownTick /></ToolCell>
        <ToolCell $w={14}><MdWrapText /></ToolCell>
        <ToolCell $w={10.6}><DownTick /></ToolCell>
        <ToolCell $w={14}><MdTextRotationAngleup /></ToolCell>
        <ToolCell $w={10.6}><DownTick /></ToolCell>
      </ToolSet>
      <ToolSet $pl={2}>
        <ToolCell $w={19}><MdLink /></ToolCell>
        <ToolCell $w={19}><MdAddComment /></ToolCell>
        <ToolCell $w={19}><MdInsertChartOutlined /></ToolCell>
        <ToolCell $w={19}><FilterIcon /></ToolCell>
        <ToolCell $w={9}><DownTick /></ToolCell>
        <ToolCell $w={19}><MdFunctions /></ToolCell>
        <ChevronCell><MdKeyboardArrowUp /></ChevronCell>
      </ToolSet>
    </SheetTools>
  );
}

function SheetGrid() {
  return (
    <SheetArea>
      <SheetTable>
        <GridRow $h={14}>
          <CornerCell />
          {columns.map((c) => (
            <ColHead key={c} $on={c === "C"}>{c}</ColHead>
          ))}
        </GridRow>
        <GridRow $h={14}>
          <RowHead $on>1</RowHead>
          <Cell>y</Cell>
          <Cell>x</Cell>
          <Cell $selected />
          {blanks.map((c) => (
            <Cell key={c} />
          ))}
        </GridRow>
        <FreezeBar>
          <FreezeCorner />
          <FreezeRest />
        </FreezeBar>
        {dataRows.map((r) => (
          <GridRow key={r.n} $h={r.h}>
            <RowHead>{r.n}</RowHead>
            <Cell $num>0</Cell>
            <Cell $num>13.5</Cell>
            <Cell />
            {blanks.map((c) => (
              <Cell key={c} />
            ))}
          </GridRow>
        ))}
      </SheetTable>
      <VScroll>
        <VThumb />
        <VArrow>▾</VArrow>
      </VScroll>
    </SheetArea>
  );
}

export default function App() {
  return (
    <Page>
      <GlobalStyle />
      <TabBar>
        <LoadBar />
        <DocTab>
          <TabCube />
          <span>Untitled*</span>
          <TabClose>×</TabClose>
        </DocTab>
        <DocTab $active>
          <TabCube dark />
          <span>Untitled*</span>
          <TabClose>×</TabClose>
        </DocTab>
        <TabPlus>+</TabPlus>
      </TabBar>

      <Viewport>
        <Canvas />
        <FusionToolbar />
        <Browser />
        <CommentsPanel>
          <PanelHead>
            <DoubleArrow />
            COMMENTS
            <DotButton $end />
            <Grip />
          </PanelHead>
        </CommentsPanel>
        <ViewCube />
        <SketchPalette />
      </Viewport>

      <Sheeter>
        <SheeterHead>
          <DotButton />
          FUSION SHEETER
        </SheeterHead>
        <DocHeader>
          <SheetsLogo />
          <TitleBlock>
            <TitleRow>
              Untitle
              <TitleIcon $ml={12} $color="#dadada" $size={13}><MdStarBorder /></TitleIcon>
              <TitleIcon $ml={4} $color="#8a8a8a" $size={13}><MdFolder /></TitleIcon>
            </TitleRow>
            <MenuRow>
              {menus.map((m) => (
                <span key={m}>{m}</span>
              ))}
              <SavedNote>All changes saved in Drive</SavedNote>
            </MenuRow>
          </TitleBlock>
          <DocActions>
            <CommentIcon><MdMessage /></CommentIcon>
            <ShareButton><MdLock />SHARE</ShareButton>
            <Avatar>C</Avatar>
          </DocActions>
        </DocHeader>
        <SpreadsheetTools />
        <FormulaBar>
          fx
          <FormulaDivider />
        </FormulaBar>
        <SheetGrid />
        <HScroll>
          <HSpacer />
          <HThumb />
          <HArrows>
            <span>◂</span>
            <span>▸</span>
          </HArrows>
        </HScroll>
        <SheetTabs>
          <TabTool $w={14}><MdAdd /></TabTool>
          <TabTool $w={5} />
          <TabTool $w={14}><MdMenu /></TabTool>
          <TabTool $w={12} />
          <SheetTab $w={61} $active>
            Parameters <MdArrowDropDown size={9} color="#888" />
          </SheetTab>
          <SheetTab $w={38}>
            BOM <MdArrowDropDown size={9} color="#888" />
          </SheetTab>
          <SheetTab $w={52}>
            Features <MdArrowDropDown size={9} color="#888" />
          </SheetTab>
          <SheetTab $w={45}>
            Display <MdArrowDropDown size={9} color="#888" />
          </SheetTab>
          <ExploreSlot><ExploreIcon /></ExploreSlot>
        </SheetTabs>
        <NavStrip>
          <NavChip>
            <OrbitIcon />
            <Caret />
            <LookIcon />
            <HandIcon />
            <ZoomIcon />
            <ZoomIcon fill="#cfd5db" />
            <Caret />
          </NavChip>
          <NavChip>
            <MonitorIcon />
            <Caret />
            <VisualIcon />
            <Caret />
            <PanesIcon />
            <Caret />
            <SheeterIcon size={11} />
          </NavChip>
          <CloseButton>Close</CloseButton>
          <PlaneName>XY Plane</PlaneName>
        </NavStrip>
      </Sheeter>

      <Timeline>
        <PlayButton><SkipIcon dir="first" /></PlayButton>
        <PlayButton><SkipIcon dir="prev" /></PlayButton>
        <PlayButton><SkipIcon dir="play" /></PlayButton>
        <PlayButton><SkipIcon dir="next" /></PlayButton>
        <PlayButton><SkipIcon dir="last" /></PlayButton>
        <TimelineItem><TimelineMark /></TimelineItem>
        <GearSlot><MdSettings /></GearSlot>
      </Timeline>
    </Page>
  );
}
